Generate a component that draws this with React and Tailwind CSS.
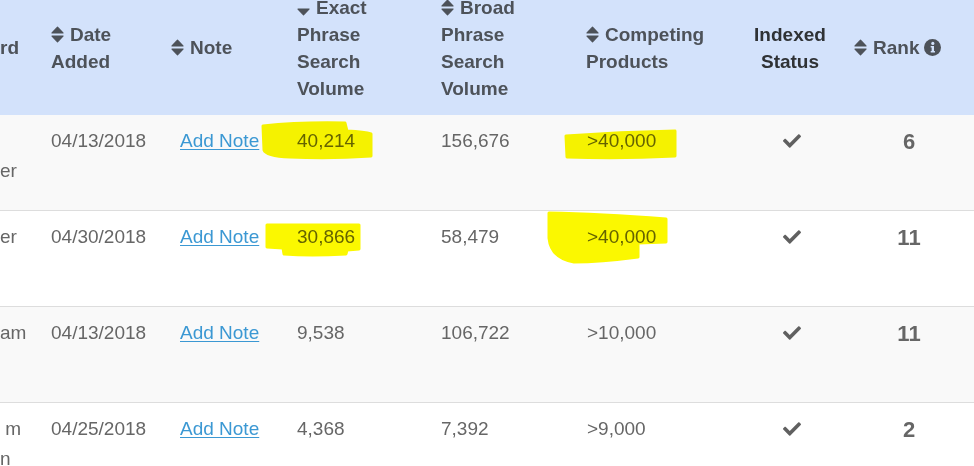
import { FaCheck } from 'react-icons/fa';

const COLS = 'grid grid-cols-[51px_120px_126px_144px_145px_144px_120px_124px]';

function SortIcon({ down }) {
  return (
    <svg width="13" height="17" viewBox="0 0 13 17" className="inline-block align-[-2px] mr-[6px]">
      {!down && <path d="M1 7 L6.5 1.2 L12 7 Z" fill="currentColor" stroke="currentColor" strokeWidth="1.2" strokeLinejoin="round" />}
      <path d="M1 10 L6.5 15.8 L12 10 Z" fill="currentColor" stroke="currentColor" strokeWidth="1.2" strokeLinejoin="round" />
    </svg>
  );
}

function InfoIcon() {
  return (
    <svg width="17" height="17" viewBox="0 0 16 16" className="inline-block align-[-2px] ml-[5px]">
      <circle cx="8" cy="8" r="8" fill="#4d5259" />
      <circle cx="8.3" cy="4.2" r="1.5" fill="#d3e2fb" />
      <path d="M6.3 6.6 H9.4 V11.4 H10.3 V12.8 H6.3 V11.4 H7.2 V8 H6.3 Z" fill="#d3e2fb" />
    </svg>
  );
}

const rows = [
  { kw: ['', 'er'], date: '04/13/2018', exact: '40,214', broad: '156,676', comp: '>40,000', rank: '6', bg: 'bg-[#f9f9f9]' },
  { kw: ['er'], date: '04/30/2018', exact: '30,866', broad: '58,479', comp: '>40,000', rank: '11', bg: 'bg-white' },
  { kw: ['am'], date: '04/13/2018', exact: '9,538', broad: '106,722', comp: '>10,000', rank: '11', bg: 'bg-[#f9f9f9]' },
  { kw: ['\u00a0m', 'n'], date: '04/25/2018', exact: '4,368', broad: '7,392', comp: '>9,000', rank: '2', bg: 'bg-white' },
];

export default function App() {
  return (
    <div className="relative w-[974px] h-[466px] overflow-hidden bg-white font-['Liberation_Sans',Arial,sans-serif]">
      {/* header */}
      <div className={`${COLS} grid-rows-[95px] h-[115px] pb-[20px] items-center bg-[#d3e2fb] text-[19px] leading-[27px] font-bold text-[#4d5259]`}>
        <div>rd</div>
        <div>
          <SortIcon />Date<br />Added
        </div>
        <div>
          <SortIcon />Note
        </div>
        <div className="-my-[7px]">
          <SortIcon down />Exact<br />Phrase<br />Search<br />Volume
        </div>
        <div className="-my-[7px]">
          <SortIcon />Broad<br />Phrase<br />Search<br />Volume
        </div>
        <div>
          <SortIcon />Competing<br />Products
        </div>
        <div className="text-center text-[#2f3235]">
          Indexed<br />Status
        </div>
        <div className="pl-[4px]">
          <SortIcon />Rank<InfoIcon />
        </div>
      </div>

      {/* body */}
      {rows.map((r, i) => (
        <div key={i} className={`${COLS} h-[96px] border-b border-[#dddddd] ${r.bg} text-[19px] leading-[30px] text-[#666]`}>
          <div className="pt-[11px]">
            {r.kw.map((t, j) => (
              <div key={j}>{t || '\u00a0'}</div>
            ))}
          </div>
          <div className="pt-[11px]">{r.date}</div>
          <div className="pt-[11px] pl-[9px]">
            <a href="#" className="text-[#3b98d3] underline underline-offset-[2px]">Add Note</a>
          </div>
          <div className="pt-[11px]">{r.exact}</div>
          <div className="pt-[11px]">{r.broad}</div>
          <div className="pt-[11px] pl-px">{r.comp}</div>
          <div className="pt-[17px] flex justify-center pl-[4px]">
            <FaCheck className="w-[18px] h-[18px] text-[#606060]" />
          </div>
          <div className="pt-[12px] pr-[6px] text-center font-bold text-[22px]">{r.rank}</div>
        </div>
      ))}

      {/* marker highlights */}
      <svg className="absolute left-0 top-0 mix-blend-multiply pointer-events-none" width="974" height="466">
        <g fill="#fbf800" stroke="#fbf800" strokeWidth="3" strokeLinejoin="round">
          <path d="M263 126 Q300 122 345 123 L347 131 Q365 132 371 134 L371 156 Q330 159 290 157 Q266 156 264 150 Z" />
          <path d="M566 136 Q620 132 675 131 L675 156 Q620 159 567 157 Z" />
          <path d="M267 225 L359 225 L359 249 L347 250 L346 254 Q310 256 284 254 L283 248 L267 247 Z" />
          <path d="M549 213 Q600 214 666 219 L666 242 L638 243 L638 257 Q600 262 574 262 Q551 258 549 238 Z" />
        </g>
      </svg>
    </div>
  );
}
